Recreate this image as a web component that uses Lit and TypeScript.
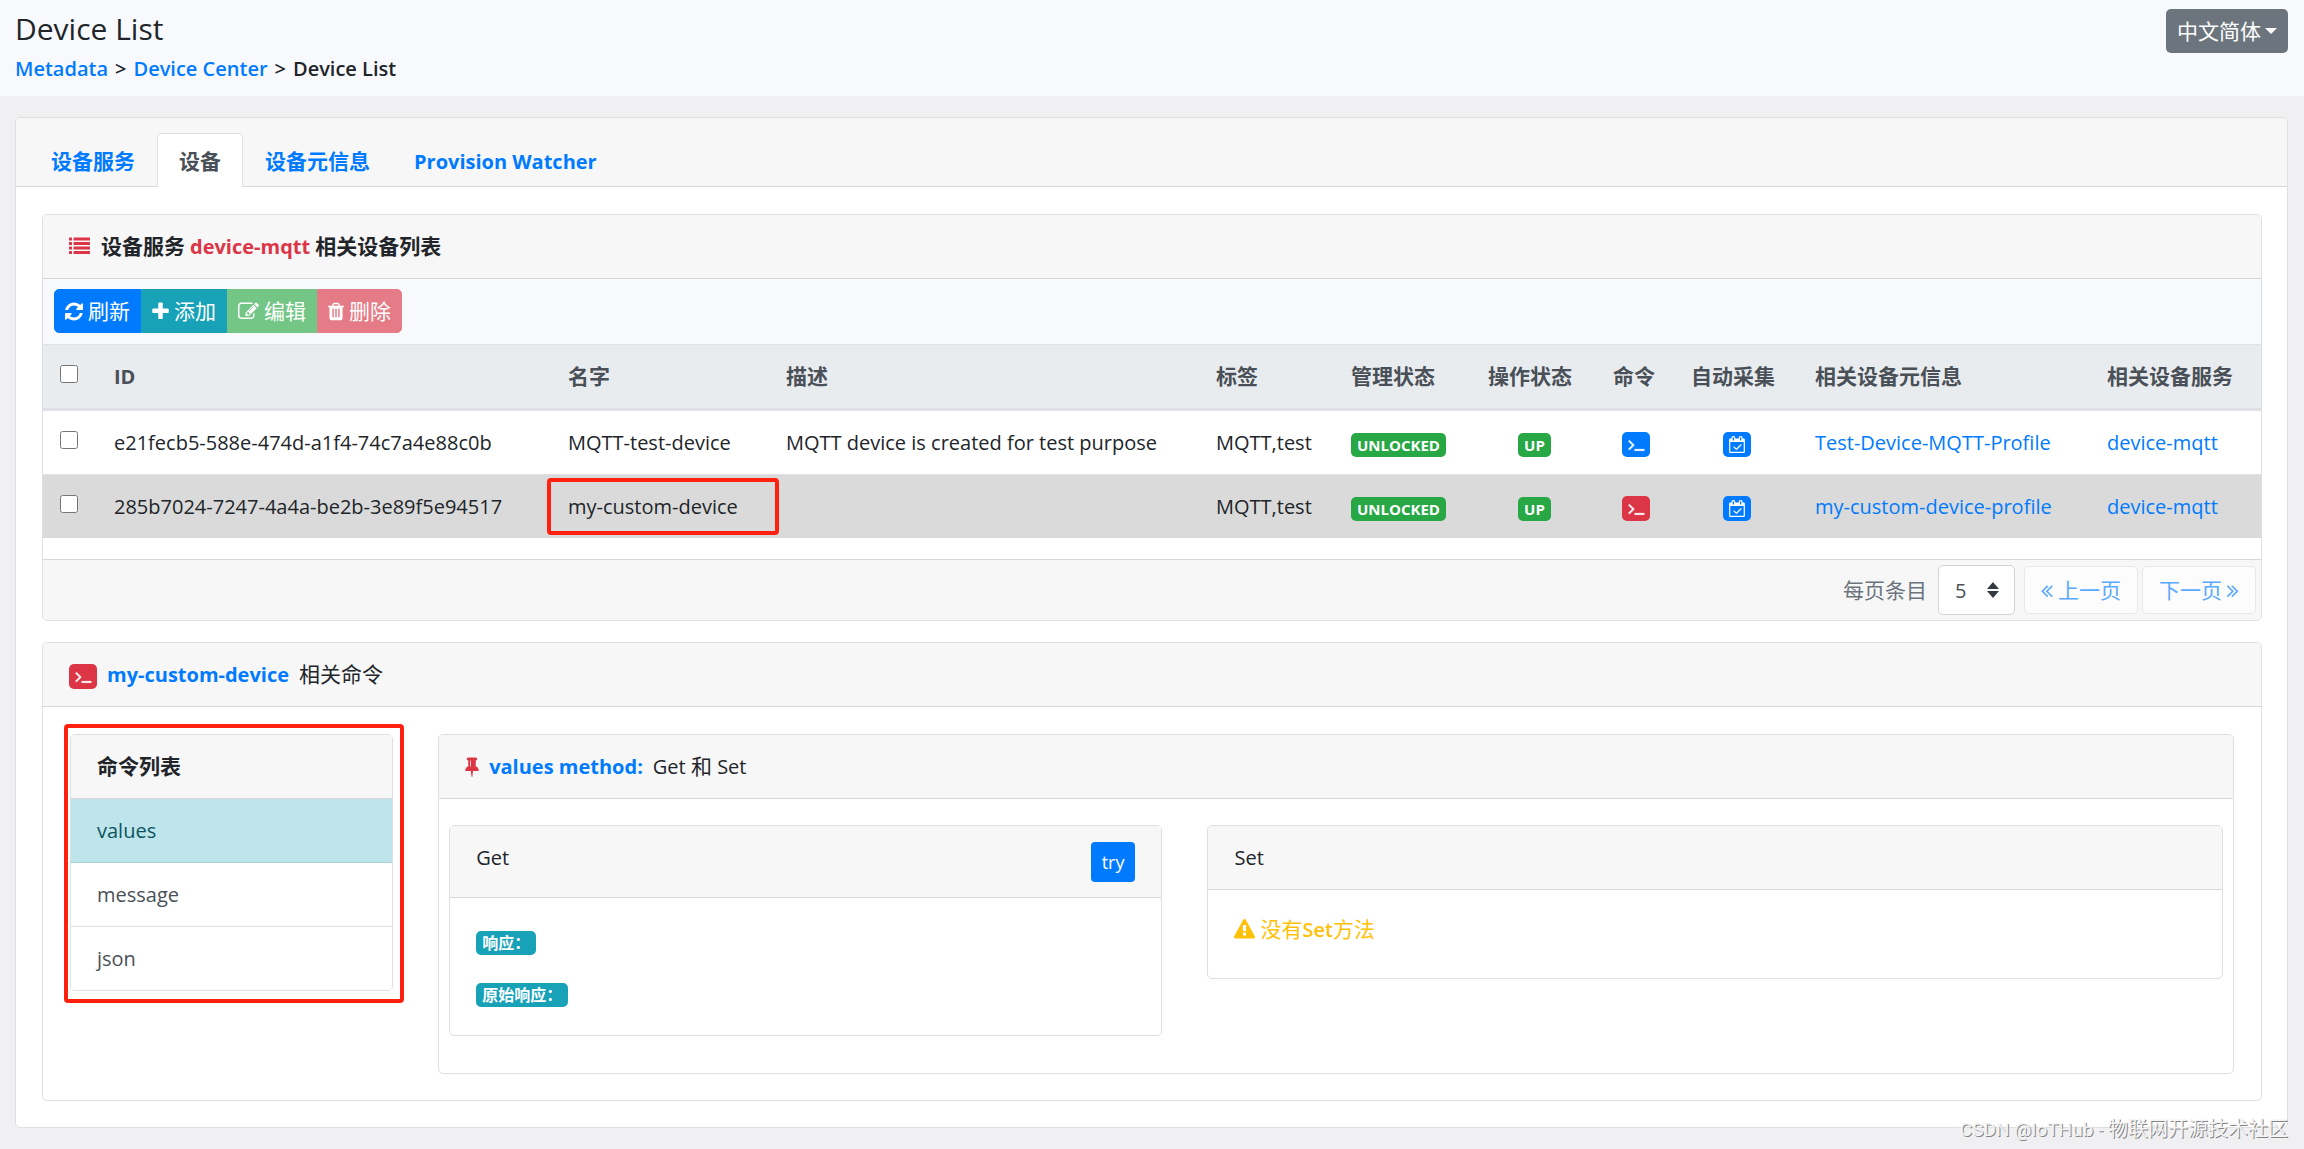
import { LitElement, html, css, svg, nothing } from "lit";
import { customElement, property, state } from "lit/decorators.js";
import { classMap } from "lit/directives/class-map.js";

interface Glyph {
  box: string;
  width: number;
  height: number;
  path: string;
}

const GLYPHS: Record<string, Glyph> = {
  list: {
    box: "0 0 1792 1792", width: 21, height: 21,
    path: "M0 160q0-32 32-32h192q32 0 32 32v192q0 32-32 32h-192q-32 0-32-32zM384 160q0-32 32-32h1344q32 0 32 32v192q0 32-32 32h-1344q-32 0-32-32zM0 544q0-32 32-32h192q32 0 32 32v192q0 32-32 32h-192q-32 0-32-32zM384 544q0-32 32-32h1344q32 0 32 32v192q0 32-32 32h-1344q-32 0-32-32zM0 928q0-32 32-32h192q32 0 32 32v192q0 32-32 32h-192q-32 0-32-32zM384 928q0-32 32-32h1344q32 0 32 32v192q0 32-32 32h-1344q-32 0-32-32zM0 1312q0-32 32-32h192q32 0 32 32v192q0 32-32 32h-192q-32 0-32-32zM384 1312q0-32 32-32h1344q32 0 32 32v192q0 32-32 32h-1344q-32 0-32-32z",
  },
  refresh: {
    box: "128 0 1536 1792", width: 18, height: 21,
    path: "M1639 1056q0 5-1 7-64 268-268 434.5t-478 166.5q-146 0-282.5-55t-243.5-157l-129 129q-19 19-45 19t-45-19-19-45v-448q0-26 19-45t45-19h448q26 0 45 19t19 45-19 45l-137 137q71 66 161 102t187 36q134 0 250-65t186-179q11-17 53-117 8-23 30-23h192q13 0 22.5 9.5t9.5 22.5zm25-800v448q0 26-19 45t-45 19h-448q-26 0-45-19t-19-45 19-45l138-138q-148-137-349-137-134 0-250 65t-186 179q-11 17-53 117-8 23-30 23h-199q-13 0-22.5-9.5t-9.5-22.5v-7q65-268 270-434.5t480-166.5q146 0 284 55.5t245 156.5l130-129q19-19 45-19t45 19 19 45z",
  },
  plus: {
    box: "192 0 1408 1792", width: 17, height: 21,
    path: "M1600 736v192q0 40-28 68t-68 28h-416v416q0 40-28 68t-68 28h-192q-40 0-68-28t-28-68v-416h-416q-40 0-68-28t-28-68v-192q0-40 28-68t68-28h416v-416q0-40 28-68t68-28h192q40 0 68 28t28 68v416h416q40 0 68 28t28 68z",
  },
  edit: {
    box: "0 0 1792 1792", width: 21, height: 21,
    path: "M888 1184l116-116-152-152-116 116v56h96v96h56zm440-720q-16-16-33 1l-350 350q-17 17-1 33t33-1l350-350q17-17 1-33zm80 594v190q0 119-84.5 203.5t-203.5 84.5h-832q-119 0-203.5-84.5t-84.5-203.5v-832q0-119 84.5-203.5t203.5-84.5h832q63 0 117 25 15 7 18 23 3 17-9 29l-49 49q-14 14-32 8-23-6-45-6h-832q-66 0-113 47t-47 113v832q0 66 47 113t113 47h832q66 0 113-47t47-113v-126q0-13 9-22l64-64q15-15 35-7t20 29zm-96-738l288 288-672 672h-288v-288zm444 132l-92 92-288-288 92-92q28-28 68-28t68 28l152 152q28 28 28 68t-28 68z",
  },
  trash: {
    box: "192 0 1408 1792", width: 16, height: 21,
    path: "M704 1376v-704q0-14-9-23t-23-9h-64q-14 0-23 9t-9 23v704q0 14 9 23t23 9h64q14 0 23-9t9-23zm256 0v-704q0-14-9-23t-23-9h-64q-14 0-23 9t-9 23v704q0 14 9 23t23 9h64q14 0 23-9t9-23zm256 0v-704q0-14-9-23t-23-9h-64q-14 0-23 9t-9 23v704q0 14 9 23t23 9h64q14 0 23-9t9-23zm-544-992h448l-48-117q-7-9-17-11h-317q-10 2-17 11zm928 32v64q0 14-9 23t-23 9h-96v948q0 83-47 143.5t-113 60.5h-832q-66 0-113-58.5t-47-141.5v-952h-96q-14 0-23-9t-9-23v-64q0-14 9-23t23-9h309l70-167q15-37 54-63t79-26h320q40 0 79 26t54 63l70 167h309q14 0 23 9t9 23z",
  },
  pin: {
    box: "320 0 1152 1792", width: 14, height: 21,
    path: "M800 864v-448q0-14-9-23t-23-9-23 9-9 23v448q0 14 9 23t23 9 23-9 9-23zm672 352q0 26-19 45t-45 19h-429l-51 483q-2 12-10.5 20.5t-20.5 8.5h-1q-27 0-32-27l-76-485h-404q-26 0-45-19t-19-45q0-123 78.5-221.5t177.5-98.5v-512q-52 0-90-38t-38-90 38-90 90-38h640q52 0 90 38t38 90-38 90-90 38v512q99 0 177.5 98.5t78.5 221.5z",
  },
  warning: {
    box: "0 0 1792 1792", width: 21, height: 21,
    path: "M1024 1375v-190q0-14-9.5-23.5t-22.5-9.5h-192q-13 0-22.5 9.5t-9.5 23.5v190q0 14 9.5 23.5t22.5 9.5h192q13 0 22.5-9.5t9.5-23.5zm-2-374l18-459q0-12-10-19-13-11-24-11h-220q-11 0-24 11-10 7-10 21l17 457q0 10 10 16.5t24 6.5h185q14 0 23.5-6.5t10.5-16.5zm-14-934l768 1408q35 63-2 126-17 29-46.5 46t-63.5 17h-1536q-34 0-63.5-17t-46.5-46q-37-63-2-126l768-1408q17-31 47-49t65-18 65 18 47 49z",
  },
  terminal: {
    box: "6 0 1792 1792", width: 17, height: 17,
    path: "M649 983l-466 466q-10 10-23 10t-23-10l-50-50q-10-10-10-23t10-23l393-393-393-393q-10-10-10-23t10-23l50-50q10-10 23-10t23 10l466 466q10 10 10 23t-10 23zm1079 457v64q0 14-9 23t-23 9h-960q-14 0-23-9t-9-23v-64q0-14 9-23t23-9h960q14 0 23 9t9 23z",
  },
  calendar: {
    box: "0 0 1664 1792", width: 16, height: 17,
    path: "M1303 964l-512 512q-10 9-23 9t-23-9l-288-288q-9-10-9-23t9-22l46-46q9-9 22-9t23 9l220 220 444-444q10-9 23-9t22 9l46 46q9 9 9 22t-9 23zm-1175 700h1408v-1024h-1408v1024zm384-1216v-288q0-14-9-23t-23-9h-64q-14 0-23 9t-9 23v288q0 14 9 23t23 9h64q14 0 23-9t9-23zm768 0v-288q0-14-9-23t-23-9h-64q-14 0-23 9t-9 23v288q0 14 9 23t23 9h64q14 0 23-9t9-23zm384-64v1280q0 52-38 90t-90 38h-1408q-52 0-90-38t-38-90v-1280q0-52 38-90t90-38h128v-96q0-66 47-113t113-47h64q66 0 113 47t47 113v96h384v-96q0-66 47-113t113-47h64q66 0 113 47t47 113v96h128q52 0 90 38t38 90z",
  },
  previous: {
    box: "400 0 1024 1792", width: 12, height: 21,
    path: "M1011 1376q0 13-10 23l-50 50q-10 10-23 10t-23-10l-466-466q-10-10-10-23t10-23l466-466q10-10 23-10t23 10l50 50q10 10 10 23t-10 23l-393 393 393 393q10 10 10 23zm384 0q0 13-10 23l-50 50q-10 10-23 10t-23-10l-466-466q-10-10-10-23t10-23l466-466q10-10 23-10t23 10l50 50q10 10 10 23t-10 23l-393 393 393 393q10 10 10 23z",
  },
  next: {
    box: "400 0 1024 1792", width: 12, height: 21,
    path: "M979 960q0 13-10 23l-466 466q-10 10-23 10t-23-10l-50-50q-10-10-10-23t10-23l393-393-393-393q-10-10-10-23t10-23l50-50q10-10 23-10t23 10l466 466q10 10 10 23zm384 0q0 13-10 23l-466 466q-10 10-23 10t-23-10l-50-50q-10-10-10-23t10-23l393-393-393-393q-10-10-10-23t10-23l50-50q10-10 23-10t23 10l466 466q10 10 10 23z",
  },
  updown: {
    box: "0 0 12 16", width: 12, height: 16,
    path: "M6 0L12 7H0zM6 16L0 9h12z",
  },
  caret: {
    box: "0 0 12 6", width: 12, height: 6,
    path: "M0 0h12L6 6z",
  },
};

const icon = (name: string) => {
  const g = GLYPHS[name];
  return html`<svg class="icon" aria-hidden="true" width=${g.width} height=${g.height} viewBox=${g.box}>
    ${svg`<path fill="currentColor" stroke="currentColor" stroke-width=${name === "terminal" ? 80 : 0} d=${g.path}></path>`}
  </svg>`;
};

const shared = css`
  * { box-sizing: border-box; }
  a { color: #007bff; text-decoration: none; }
  button, select { font: inherit; margin: 0; cursor: pointer; }
  button:disabled { cursor: default; }
  .icon { display: block; flex: none; }
  .card { background: #fff; border: 1px solid #dfdfdf; border-radius: 5px; }
  .card-head {
    display: flex; align-items: center; gap: 10px;
    padding: 16px 26px; margin: 0;
    font-size: 20px; font-weight: 400; line-height: 31px;
    background: #f7f7f7; border-bottom: 1px solid #d8d8d8;
    border-radius: 4px 4px 0 0;
  }
  .chip {
    display: inline-flex; align-items: center; justify-content: center;
    width: 28px; height: 25px; padding: 0; border: 0; border-radius: 5px;
    color: #fff; background: #007bff; vertical-align: middle;
  }
  .chip.danger { background: #dc3545; }
  .cjk { font-size: 21px; }
  .strong { font-weight: 700; }
  .blue { color: #007bff; }
  .red { color: #dc3545; }
  .marked { position: relative; }
  .mark {
    position: absolute; border: 4px solid #ff2010; border-radius: 4px;
    pointer-events: none; z-index: 1;
  }
`;

interface Device {
  id: string;
  name: string;
  description: string;
  profile: string;
}

const DEVICES: Device[] = [
  {
    id: "e21fecb5-588e-474d-a1f4-74c7a4e88c0b",
    name: "MQTT-test-device",
    description: "MQTT device is created for test purpose",
    profile: "Test-Device-MQTT-Profile",
  },
  {
    id: "285b7024-7247-4a4a-be2b-3e89f5e94517",
    name: "my-custom-device",
    description: "",
    profile: "my-custom-device-profile",
  },
];

const COLUMNS = [
  "ID", "名字", "描述", "标签", "管理状态", "操作状态", "命令", "自动采集", "相关设备元信息", "相关设备服务",
];

@customElement("device-table")
export class DeviceTable extends LitElement {
  @property() selected = "";

  static styles = [shared, css`
    :host { display: block; }
    .title { gap: 5px; }
    .title .icon { margin-right: 6px; }
    .toolbar { display: flex; padding: 10px 11px 11px; background: #f8f9fc; }
    .tool {
      display: flex; align-items: center; gap: 5px;
      padding: 5px 10px; border: 1px solid; color: #fff;
      font-size: 21px; line-height: 32px;
    }
    .tool:first-child { border-radius: 5px 0 0 5px; }
    .tool:last-child { border-radius: 0 5px 5px 0; }
    .refresh { background: #007bff; border-color: #007bff; }
    .add { background: #17a2b8; border-color: #17a2b8; }
    .edit { background: #73c686; border-color: #73c686; }
    .delete { background: #e57b86; border-color: #e57b86; }
    table { width: 100%; table-layout: fixed; border-spacing: 0; margin-bottom: 21px; }
    .c-check { width: 55px; }
    .c-id { width: 454px; }
    .c-name { width: 218px; }
    .c-desc { width: 430px; }
    .c-tag { width: 135px; }
    .c-admin { width: 137px; }
    .c-oper { width: 125px; }
    .c-cmd { width: 78px; }
    .c-auto { width: 124px; }
    .c-profile { width: 292px; }
    .c-service { width: 170px; }
    th, td {
      height: 64px; padding: 0 16px; text-align: left; white-space: nowrap;
      font-size: 20px; line-height: 31px; border-top: 1px solid #dee2e6;
    }
    th {
      height: 66px; color: #495057; background: #e9ecef;
      border-bottom: 2px solid #dee2e6;
    }
    th.cjk { font-size: 21px; }
    .active td { background: #dadada; }
    .center { text-align: center; }
    .check { display: block; width: 18px; height: 18px; margin: 0 0 5px 1px; }
    .badge {
      display: inline-block; padding: 0 6px; border-radius: 5px;
      font-size: 15px; font-weight: 700; line-height: 24px;
      color: #fff; background: #28a745; vertical-align: middle;
    }
    .mark { inset: 3px -9px 3px -5px; }
    .foot {
      display: flex; align-items: center; justify-content: flex-end;
      padding: 5px; background: #f7f7f7; border-top: 1px solid #d8d8d8;
      border-radius: 0 0 4px 4px;
    }
    .size-label { color: #6c757d; margin-right: 11px; }
    .size { display: grid; align-items: center; margin-right: 9px; }
    .size select, .size .icon { grid-area: 1 / 1; }
    .size .icon { justify-self: end; margin-right: 16px; color: #343a40; pointer-events: none; }
    select {
      appearance: none; width: 77px; height: 50px; padding: 0 16px;
      color: #495057; background: #fff; border: 1px solid #ced4da; border-radius: 5px;
    }
    .page {
      display: flex; align-items: center; gap: 5px; height: 48px; padding: 0 16px;
      font-size: 21px; color: #59a9ff; background: #fcfcfc;
      border: 1px solid #e8e8ea; border-radius: 5px;
    }
    .page + .page { margin-left: 4px; }
  `];

  private row(d: Device) {
    const active = d.name === this.selected;
    return html`<tr class=${classMap({ active })}>
      <td><input class="check" type="checkbox" aria-label=${d.name}></td>
      <td>${d.id}</td>
      <td class=${classMap({ marked: active })}>${d.name}${active ? html`<span class="mark"></span>` : nothing}</td>
      <td>${d.description}</td>
      <td>MQTT,test</td>
      <td><span class="badge">UNLOCKED</span></td>
      <td class="center"><span class="badge">UP</span></td>
      <td class="center">
        <button class=${classMap({ chip: true, danger: active })} aria-label="命令">${icon("terminal")}</button>
      </td>
      <td class="center"><button class="chip" aria-label="自动采集">${icon("calendar")}</button></td>
      <td><a href="#profile">${d.profile}</a></td>
      <td><a href="#service">device-mqtt</a></td>
    </tr>`;
  }

  render() {
    return html`<section class="card">
      <h2 class="card-head title strong">
        <span class="red">${icon("list")}</span>
        <span class="cjk">设备服务</span>
        <span class="red">device-mqtt</span>
        <span class="cjk">相关设备列表</span>
      </h2>
      <div class="toolbar">
        <button class="tool refresh">${icon("refresh")}刷新</button>
        <button class="tool add">${icon("plus")}添加</button>
        <button class="tool edit" disabled>${icon("edit")}编辑</button>
        <button class="tool delete" disabled>${icon("trash")}删除</button>
      </div>
      <table>
        <colgroup>
          <col class="c-check"><col class="c-id"><col class="c-name"><col class="c-desc">
          <col class="c-tag"><col class="c-admin"><col class="c-oper"><col class="c-cmd">
          <col class="c-auto"><col class="c-profile"><col class="c-service">
        </colgroup>
        <thead>
          <tr>
            <th><input class="check" type="checkbox" aria-label="ID"></th>
            ${COLUMNS.map((c) => html`<th class=${classMap({ cjk: c !== "ID" })}>${c}</th>`)}
          </tr>
        </thead>
        <tbody>${DEVICES.map((d) => this.row(d))}</tbody>
      </table>
      <div class="foot">
        <label class="size-label cjk" for="size">每页条目</label>
        <div class="size">
          <select id="size"><option>5</option><option>10</option><option>15</option></select>
          ${icon("updown")}
        </div>
        <button class="page" disabled>${icon("previous")}上一页</button>
        <button class="page" disabled>下一页${icon("next")}</button>
      </div>
    </section>`;
  }
}

@customElement("command-panel")
export class CommandPanel extends LitElement {
  @property() device = "";
  @state() private command = "values";

  static styles = [shared, css`
    :host { display: block; }
    .card-head .chip { margin-top: 3px; }
    .body {
      display: grid; grid-template-columns: 323fr 1795fr; gap: 45px;
      align-items: start; padding: 27px 27px 26px;
    }
    .mark { inset: -11px -12px -13px -7px; }
    .item {
      display: block; width: 100%; padding: 16px 26px; border: 0;
      border-bottom: 1px solid #dfdfdf; background: #fff; color: #495057;
      font-size: 20px; line-height: 31px; text-align: left;
    }
    .item:last-of-type { border-bottom: 0; border-radius: 0 0 4px 4px; }
    .item.active { color: #0c5460; background: #bee5eb; border-color: #abced4; }
    .methods {
      display: grid; grid-template-columns: 713fr 1015fr; gap: 45px;
      align-items: start; padding: 26px 10px 37px;
    }
    .get-head { align-items: start; justify-content: space-between; height: 72px; }
    .try {
      height: 40px; padding: 0 11px; border: 0; border-radius: 4px;
      color: #fff; background: #007bff; font-size: 18px; line-height: 40px;
    }
    .results {
      display: flex; flex-direction: column; align-items: flex-start; gap: 28px;
      padding: 33px 26px 28px;
    }
    .label {
      padding: 0 6px; border-radius: 5px; font-size: 16px; font-weight: 700;
      line-height: 24px; color: #fff; background: #17a2b8;
    }
    .empty {
      display: flex; align-items: center; gap: 5px; margin: 0;
      padding: 24px 26px 33px; color: #ffc107; font-size: 21px; line-height: 31px;
    }
    .word { font-size: 20px; font-weight: 600; }
  `];

  render() {
    return html`<section class="card">
      <h2 class="card-head">
        <span class="chip danger">${icon("terminal")}</span>
        <span class="strong blue">${this.device}</span>
        <span class="cjk">相关命令</span>
      </h2>
      <div class="body">
        <div class="card marked">
          <h3 class="card-head strong cjk">命令列表</h3>
          ${["values", "message", "json"].map((c) => html`<button
            class=${classMap({ item: true, active: c === this.command })}
            @click=${() => { this.command = c; }}>${c}</button>`)}
          <span class="mark"></span>
        </div>
        <div class="card">
          <h3 class="card-head">
            <span class="red">${icon("pin")}</span>
            <span class="strong blue">${this.command} method:</span>
            <span>Get <span class="cjk">和</span> Set</span>
          </h3>
          <div class="methods">
            <div class="card">
              <div class="card-head get-head"><span>Get</span><button class="try">try</button></div>
              <div class="results">
                <span class="label">响应：</span>
                <span class="label">原始响应：</span>
              </div>
            </div>
            <div class="card">
              <div class="card-head">Set</div>
              <p class="empty">${icon("warning")}<span>没有<span class="word">Set</span>方法</span></p>
            </div>
          </div>
        </div>
      </div>
    </section>`;
  }
}

@customElement("app-root")
export class AppRoot extends LitElement {
  static styles = [shared, css`
    :host {
      display: block; position: relative; min-height: 100vh; box-sizing: border-box;
      background: #f0f0f2; color: #212529; font-size: 20px; line-height: 31px;
      font-family: "Open Sans", "Noto Sans CJK SC", sans-serif;
    }
    .top {
      display: flex; align-items: flex-start; justify-content: space-between;
      padding: 10px 16px 12px 15px; background: #f8f9fc;
    }
    .name { margin: 0 0 5px; font-size: 30px; font-weight: 500; line-height: 38px; }
    .crumbs { display: flex; gap: 7px; font-weight: 600; }
    .lang {
      display: flex; align-items: center; gap: 4px; height: 44px; margin-top: -1px;
      padding: 0 11px; border: 0; border-radius: 5px; color: #fff;
      background: #6c757d; font-size: 21px;
    }
    main { padding: 21px 16px 21px 15px; }
    .tabs {
      display: flex; padding: 15px 13px 0; background: #f7f7f7;
      border-bottom: 1px solid #d8d8d8; border-radius: 4px 4px 0 0;
    }
    .tab {
      padding: 12px 21px 10px; margin-bottom: -1px; font-weight: 700;
      border: 1px solid transparent; border-bottom: 0; border-radius: 5px 5px 0 0;
    }
    .tab.active { color: #495057; background: #fff; border-color: #dee2e6; }
    .panel { display: grid; gap: 21px; padding: 27px 26px 26px; }
    .credit {
      position: absolute; right: 16px; bottom: 4px; z-index: 2;
      font: 20px/31px "Noto Sans CJK SC", sans-serif;
      color: #f4f4f4; text-shadow: 1px 1px 0 #858585;
    }
    .site { font-family: Roboto, sans-serif; font-size: 19px; }
  `];

  render() {
    return html`
      <header class="top">
        <div>
          <h1 class="name">Device List</h1>
          <nav class="crumbs">
            <a href="#metadata">Metadata</a><span>&gt;</span>
            <a href="#center">Device Center</a><span>&gt;</span>
            <span>Device List</span>
          </nav>
        </div>
        <button class="lang">中文简体${icon("caret")}</button>
      </header>
      <main>
        <div class="card">
          <nav class="tabs">
            <a class="tab cjk" href="#services">设备服务</a>
            <a class="tab cjk active" href="#devices">设备</a>
            <a class="tab cjk" href="#profiles">设备元信息</a>
            <a class="tab" href="#watcher">Provision Watcher</a>
          </nav>
          <div class="panel">
            <device-table selected="my-custom-device"></device-table>
            <command-panel device="my-custom-device"></command-panel>
          </div>
        </div>
      </main>
      <div class="credit"><span class="site">CSDN @IoTHub - </span>物联网开源技术社区</div>
    `;
  }
}
